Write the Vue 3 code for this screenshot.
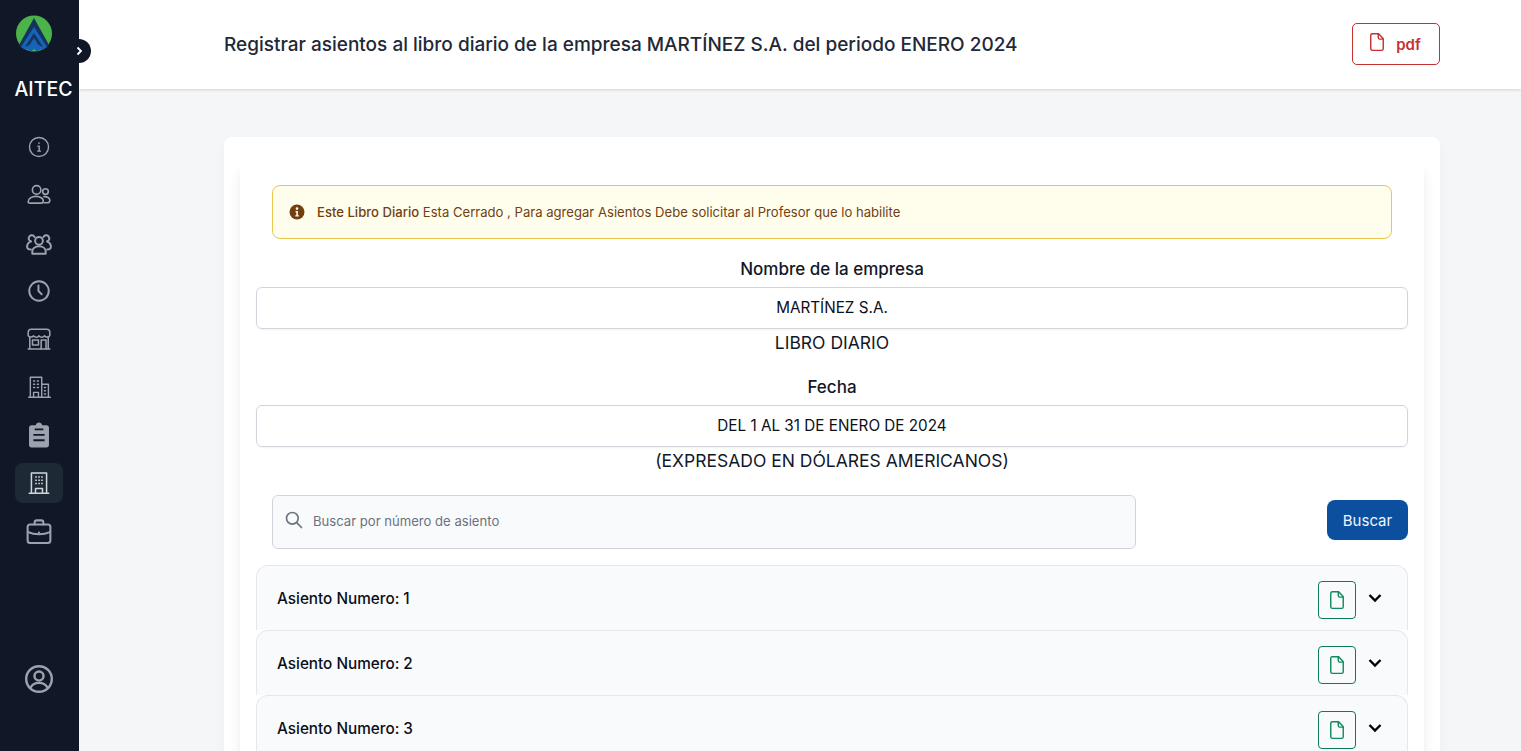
<template>
  <div class="layout">
    <aside class="sidebar">
      <div class="logo">
        <svg width="38" height="38" viewBox="0 0 38 38">
          <circle cx="19" cy="18.5" r="18" fill="#4cb24a" />
          <path d="M19 3 L34 30 L29 35 L19 21 L9 35 L4 30 Z" fill="#14335f" />
          <path d="M19 12 L32 32 L27 35 Q23 32 19 32 Q15 32 11 35 L6 32 Z" fill="#1763b8" />
          <path d="M19 18 L28 32 Q23 29 19 29 Q15 29 10 32 Z" fill="#14335f" />
          <path d="M19 23 L26 34 L22 36.500 L19 34 L16 36.500 L12 34 Z" fill="#1763b8" />
        </svg>
      </div>
      <div class="brand">AITEC</div>
      <button class="toggle">
        <svg width="10" height="10" viewBox="0 0 10 10"><path d="M3.500 1.500 L7 5 L3.500 8.500" fill="none" stroke="#fff" stroke-width="1.800" /></svg>
      </button>
      <nav class="menu">
        <a v-for="item in menu" :key="item.id" :class="['menu-item', { active: item.id === 'empresa' }]">
          <svg width="26" height="26" viewBox="0 0 24 24" fill="none" stroke="#9ca3af" stroke-width="1.500" stroke-linecap="round" stroke-linejoin="round">
            <template v-if="item.id === 'info'">
              <circle cx="12" cy="12" r="8.800" stroke-width="1.300" />
              <path d="M11 11.200h1.200v4.600M10.800 15.800h2.600" stroke-width="1.300" />
              <circle cx="12" cy="8.400" r=".8" fill="#9ca3af" stroke="none" />
            </template>
            <template v-else-if="item.id === 'users'">
              <circle cx="9.800" cy="7.300" r="3.900" stroke-width="1.500" />
              <circle cx="18" cy="8.800" r="2.600" stroke-width="1.500" />
              <path d="M2 18.500c0-3.300 3.200-5.200 7.200-5.200s6.800 2 6.800 4.300c0 1.300-1 1.900-2.200 1.900H4c-1.200 0-2-.2-2-1z" stroke-width="1.500" />
              <path d="M16.500 13.500c3-.2 5.500 1.300 5.500 3.500 0 1.300-1 2.100-2.300 2.100h-3" stroke-width="1.500" />
            </template>
            <template v-else-if="item.id === 'team'">
              <circle cx="12" cy="10" r="3.600" stroke-width="1.800" />
              <path d="M8 6.500a2.900 2.900 0 1 0-3.500 4M16 6.500a2.900 2.900 0 1 1 3.500 4" stroke-width="1.800" />
              <path d="M5.800 22v-2.200c0-2.900 2.800-4.800 6.200-4.800s6.200 1.900 6.200 4.800V22z" stroke-width="1.800" />
              <path d="M4.500 10.500C2.500 11.500 1 13.200 1 15.200c0 1.800 1.300 2.800 3.500 2.800M19.500 10.500c2 1 3.500 2.700 3.500 4.700 0 1.800-1.300 2.800-3.500 2.800" stroke-width="1.800" />
            </template>
            <template v-else-if="item.id === 'clock'">
              <circle cx="12" cy="12" r="9" stroke-width="1.800" />
              <path d="M11.500 6.800v5.200l3 3" stroke-width="1.800" />
            </template>
            <template v-else-if="item.id === 'store'">
              <path d="M3.500 10.500V21M20.500 10.500V21M2 21.200h20" stroke-width="1.400" />
              <path d="M5 3h14c2 0 3 1.500 3 3v2.500c-.5 2.200-4 2.200-5 .5-1 1.800-4 1.800-5 0-1 1.800-4 1.800-5 0-1 1.700-4.500 1.700-5-.5V6c0-1.500 1-3 3-3z" stroke-width="1.400" />
              <rect x="6" y="13" width="5.500" height="4.500" stroke-width="1.400" />
              <path d="M14 21v-8h4.500v8" stroke-width="1.400" />
            </template>
            <template v-else-if="item.id === 'offices'">
              <path d="M2.500 21.500h20M4 21.500V3h10.500v18.500M14.500 9.500h6.200v12" stroke-width="1.300" />
              <path d="M7 6.500h1M10.500 6.500h1M7 9.500h1M10.500 9.500h1M7 12.500h1M10.500 12.500h1M17 12.500h1M17 15.500h1M17 18.500h1" stroke-width="1.300" />
              <path d="M7 21.500v-4.500h4.500v4.500" stroke-width="1.300" />
            </template>
            <template v-else-if="item.id === 'clipboard'">
              <path fill="#9ca3af" stroke="none" fill-rule="evenodd" d="M9 3C9.400 1.500 10.600 .5 12 .5s2.600 1 3 2.500h4c1.300 0 2.200 1 2.200 2.200v16c0 1.300-1 2.300-2.200 2.300H5c-1.300 0-2.200-1-2.200-2.300v-16C2.800 4 3.800 3 5 3zM8 6v1.500h8V6zM6.800 11v1.800h10.400V11zM6.800 16v1.800h10.400V16z" />
            </template>
            <template v-else-if="item.id === 'empresa'">
              <path d="M3 21.500h18M5 21.500V2.800h14v18.700" stroke="#d1d5db" stroke-width="1.400" />
              <path d="M8.500 6.500h1.500M11.300 6.500h1.500M14 6.500h1.500M8.500 9.500h1.500M11.300 9.500h1.500M14 9.500h1.500M8.500 12.500h1.500M11.300 12.500h1.500M14 12.500h1.500" stroke="#d1d5db" stroke-width="1.400" stroke-linecap="butt" />
              <path d="M8.800 21.500v-4.500h6.400v4.500" stroke="#d1d5db" stroke-width="1.400" />
            </template>
            <template v-else>
              <path d="M8 6V4c0-1 .8-1.800 1.800-1.800h4.400c1 0 1.800.8 1.800 1.800v2" stroke-width="1.900" />
              <rect x="1.500" y="6" width="21" height="17" rx="2.300" stroke-width="1.900" />
              <path d="M2 13c3 1.400 6.300 2 10 2s7-.6 10-2" stroke-width="1.900" />
              <circle cx="12" cy="13.500" r="1" fill="#9ca3af" stroke="none" />
            </template>
          </svg>
        </a>
      </nav>
      <div class="profile">
        <svg width="32" height="32" viewBox="0 0 24 24" fill="none" stroke="#9ca3af" stroke-width="1.800">
          <circle cx="12" cy="12" r="9.600" />
          <circle cx="12" cy="9.800" r="3.400" />
          <path d="M5.600 18.500c1.300-2.300 3.600-3.600 6.400-3.600s5.100 1.300 6.400 3.600" />
        </svg>
      </div>
    </aside>

    <div class="main">
      <header class="topbar">
        <h1>Registrar asientos al libro diario de la empresa MARTÍNEZ S.A. del periodo ENERO 2024</h1>
        <button class="btn-pdf">
          <svg width="20" height="20" viewBox="0 0 24 24" fill="none" stroke="#c53030" stroke-width="1.700" stroke-linejoin="round">
            <path d="M4.500 4a2 2 0 0 1 2-2h7.500l5.500 6v12a2 2 0 0 1-2 2h-11a2 2 0 0 1-2-2z" />
            <path d="M13.500 2v4.500a2 2 0 0 0 2 2h4" />
          </svg>
          <span>pdf</span>
        </button>
      </header>

      <section class="content">
        <div class="card">
          <div class="inner">
            <div class="alert">
              <svg width="16" height="16" viewBox="0 0 16 16">
                <circle cx="8" cy="8" r="7.500" fill="#713f12" />
                <circle cx="8" cy="4.600" r="1.300" fill="#fefce8" />
                <path d="M6.500 7h2.400v4.200h1v1.200H6.300v-1.200h1V8.200h-.8z" fill="#fefce8" />
              </svg>
              <p><strong>Este Libro Diario</strong> Esta Cerrado , Para agregar Asientos Debe solicitar al Profesor que lo habilite</p>
            </div>

            <label class="field-label first">Nombre de la empresa</label>
            <div class="field">MARTÍNEZ S.A.</div>
            <div class="sub">LIBRO DIARIO</div>

            <label class="field-label second">Fecha</label>
            <div class="field">DEL 1 AL 31 DE ENERO DE 2024</div>
            <div class="sub">(EXPRESADO EN DÓLARES AMERICANOS)</div>

            <div class="search-row">
              <div class="search">
                <svg width="20" height="20" viewBox="0 0 24 24" fill="none" stroke="#6b7280" stroke-width="2" stroke-linecap="round">
                  <circle cx="10" cy="10" r="7" />
                  <path d="M15.500 15.500 21 21" />
                </svg>
                <input type="text" placeholder="Buscar por número de asiento" />
              </div>
              <button class="btn-buscar">Buscar</button>
            </div>

            <div class="asientos">
              <div v-for="n in 3" :key="n" class="asiento">
                <span>Asiento Numero: {{ n }}</span>
                <div class="asiento-actions">
                  <button class="btn-doc">
                    <svg width="20" height="20" viewBox="0 0 24 24" fill="none" stroke="#0f8a5f" stroke-width="1.700" stroke-linejoin="round">
                      <path d="M4.500 4a2 2 0 0 1 2-2h7.500l5.500 6v12a2 2 0 0 1-2 2h-11a2 2 0 0 1-2-2z" />
                      <path d="M13.500 2v4.500a2 2 0 0 0 2 2h4" />
                    </svg>
                  </button>
                  <svg class="chevron" width="14" height="10" viewBox="0 0 14 10"><path d="M1.500 2 7 7.500 12.500 2" fill="none" stroke="#000" stroke-width="2.400" /></svg>
                </div>
              </div>
            </div>
          </div>
        </div>
      </section>
    </div>
  </div>
</template>

<script setup>
const menu = [
  { id: 'info' },
  { id: 'users' },
  { id: 'team' },
  { id: 'clock' },
  { id: 'store' },
  { id: 'offices' },
  { id: 'clipboard' },
  { id: 'empresa' },
  { id: 'case' }
];
</script>

<style>
html, body { margin: 0; height: 100%; overflow: hidden; }
</style>

<style scoped>
.layout { display: flex; height: 100vh; overflow: hidden; font-family: Inter, "Noto Sans", sans-serif; background: #f4f6f8; color: #111827; }
.sidebar { position: relative; width: 79px; flex: none; background: #101828; display: flex; flex-direction: column; align-items: center; z-index: 2; }
.logo { height: 38px; margin-top: 15px; margin-right: 12px; }
.logo svg { display: block; }
.brand { margin-top: 23px; margin-left: 8px; color: #fff; font-size: 19.5px; line-height: 26px; font-weight: 500; }
.toggle { position: absolute; top: 39px; right: -12px; width: 24px; height: 24px; padding: 0; border: none; border-radius: 50%; background: #101828; display: flex; align-items: center; justify-content: center; }
.menu { margin-top: 25px; margin-right: 2px; display: flex; flex-direction: column; gap: 8px; }
.menu-item { width: 48px; height: 40px; border-radius: 8px; display: flex; align-items: center; justify-content: center; }
.menu-item.active { background: #1e2936; }
.profile { margin-top: auto; margin-bottom: 56px; margin-right: 2px; height: 32px; }
.profile svg { display: block; }

.main { flex: 1; min-width: 0; display: flex; flex-direction: column; }
.topbar { height: 89px; flex: none; box-sizing: border-box; background: #fff; box-shadow: 0 1px 3px rgba(0,0,0,0.15); display: flex; align-items: center; justify-content: space-between; padding: 0 81px 0 145px; }
.topbar h1 { margin: 0; font-size: 19px; font-weight: 500; color: #1f2937; }
.btn-pdf { width: 88px; height: 42px; margin-top: -1px; background: #fff; border: 1px solid #c53030; border-radius: 5px; color: #c53030; font: 600 15px Inter, sans-serif; display: flex; align-items: center; justify-content: center; gap: 9px; }
.btn-pdf svg { margin-top: -4px; margin-left: -4px; }

.content { flex: 1; min-height: 0; padding: 48px 81px 0 145px; }
.card { background: #fff; border-radius: 8px; padding: 23px 16px 0; box-shadow: 0 4px 12px rgba(0,0,0,0.03); }
.inner { padding: 25px 16px 0; box-shadow: 0 10px 15px -3px rgba(0,0,0,0.1), 0 4px 6px -4px rgba(0,0,0,0.1); display: flex; flex-direction: column; }
.alert { margin: 0 16px; height: 54px; box-sizing: border-box; background: #fffeec; border: 1px solid #eac54f; border-radius: 8px; display: flex; align-items: center; gap: 12px; padding: 0 16px; color: #713f12; font-size: 13.1px; }
.alert p { margin: 0; }
.alert strong { font-weight: 500; }
.field-label { text-align: center; font-size: 17px; line-height: 20px; font-weight: 500; color: #111827; }
.field-label.first { margin-top: 20px; margin-bottom: 8px; }
.field-label.second { margin-top: 20px; margin-bottom: 8px; }
.field { height: 42px; box-sizing: border-box; border: 1px solid #d1d5db; border-radius: 6px; display: flex; align-items: center; justify-content: center; font-size: 15.25px; color: #0b0f19; box-shadow: 0 1px 2px rgba(0,0,0,0.05); padding-bottom: 1px; }
.sub { text-align: center; font-size: 17.5px; line-height: 28px; color: #111827; }
.search-row { margin: 20px 0 0 16px; display: flex; align-items: flex-start; justify-content: space-between; }
.search { width: 864px; height: 54px; box-sizing: border-box; background: #f9fafc; border: 1px solid #d1d5db; border-radius: 6px; display: flex; align-items: center; gap: 8px; padding: 0 11px; }
.search svg { margin-top: -4px; }
.search input { flex: 1; border: none; outline: none; background: transparent; font: 13.1px Inter, sans-serif; color: #111827; padding: 0 1px 2px; }
.search input::placeholder { color: #6b7280; opacity: 1; }
.btn-buscar { width: 81px; height: 40px; margin-top: 5px; border: none; border-radius: 8px; background: #0b4f9e; color: #eff6ff; font: 400 15px Inter, sans-serif; }
.asientos { margin-top: 16px; }
.asiento { height: 65px; box-sizing: border-box; background: #f9fafc; border: 1px solid #e5e7eb; border-bottom: none; border-radius: 12px 12px 0 0; display: flex; align-items: center; justify-content: space-between; padding: 0 25px 0 20px; font-size: 15.3px; font-weight: 500; color: #0b0f19; }
.asiento-actions { display: flex; align-items: center; gap: 12px; }
.btn-doc { width: 38px; height: 38px; margin-top: 4px; padding: 0; background: transparent; border: 1px solid #0f7a55; border-radius: 4px; display: flex; align-items: center; justify-content: center; }
.chevron { display: block; }
</style>
